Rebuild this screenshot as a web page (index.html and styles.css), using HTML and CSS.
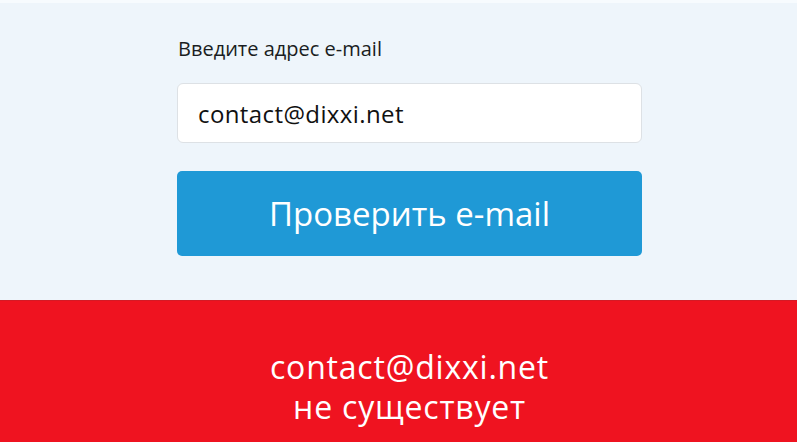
FILE: index.html
```html
<!DOCTYPE html>
<html lang="ru">
<head>
<meta charset="utf-8">
<title>Проверка e-mail</title>
<link rel="stylesheet" href="styles.css">
</head>
<body>
<section class="check">
  <form class="check-form">
    <label class="check-label" for="email">Введите адрес e-mail</label>
    <input class="check-input" id="email" type="text" value="contact@dixxi.net">
    <button class="check-button" type="button">Проверить e-mail</button>
  </form>
</section>
<section class="result result-bad">
  <p class="result-text">contact@dixxi.net<br>не существует</p>
</section>
</body>
</html>
```
FILE: styles.css
```css
* { box-sizing: border-box; }

html, body {
  margin: 0;
  height: 100%;
}

body {
  font-family: "Open Sans", "Noto Sans", sans-serif;
  background: #eef5fb;
  display: flex;
  flex-direction: column;
}

.check {
  height: 300px;
  padding: 34px 0 0 177px;
  border-top: 3px solid #f7fbfe;
}

.check-form {
  width: 465px;
  display: flex;
  flex-direction: column;
}

.check-label {
  font-size: 20px;
  line-height: 24px;
  color: #1a1d22;
  padding-left: 1px;
  margin-bottom: 22px;
}

.check-input {
  height: 60px;
  border: 1px solid #dde1e5;
  border-radius: 6px;
  background: #fff;
  padding: 0 20px;
  font: inherit;
  font-size: 24px;
  letter-spacing: 0.4px;
  color: #111;
  outline: none;
}

.check-button {
  margin-top: 28px;
  height: 85px;
  border: none;
  border-radius: 5px;
  background: #1f99d6;
  color: #fff;
  font: inherit;
  font-size: 33px;
}

/* result block shares the form's column so the message sits under it */
.result {
  flex: 1;
  background: #ef1320;
  border-top: 1px solid #d41a25;
  padding: 46px 0 0 177px;
}

.result-text {
  width: 465px;
  margin: 0;
  text-align: center;
  color: #fff;
  font-size: 32px;
  letter-spacing: 0.8px;
  line-height: 40px;
}
```
